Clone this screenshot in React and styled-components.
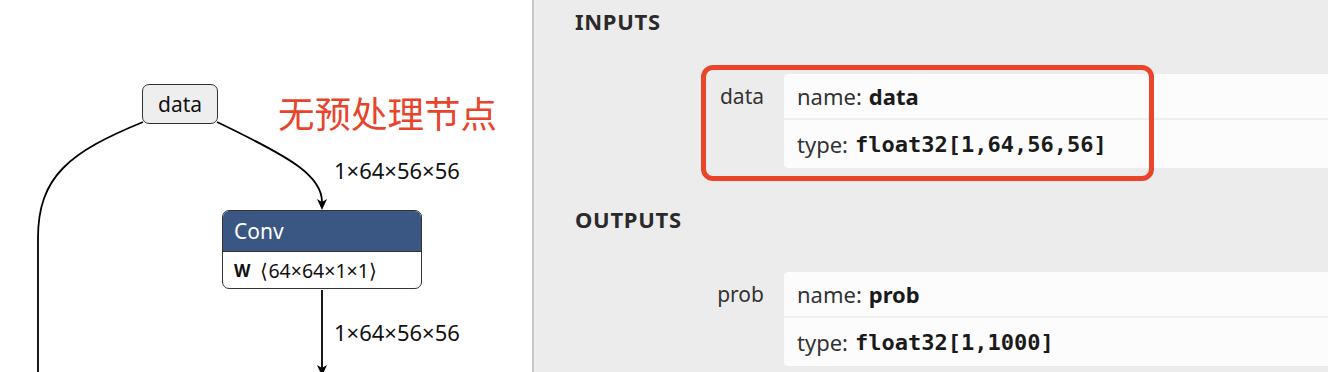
import styled, { createGlobalStyle } from "styled-components";

const GlobalStyle = createGlobalStyle`
  html, body {
    margin: 0;
    padding: 0;
    background: #ffffff;
  }
  body {
    font-family: "Noto Sans", "Open Sans", sans-serif;
    color: #222;
  }
`;

const Page = styled.div`
  display: flex;
  width: 1328px;
  height: 372px;
  overflow: hidden;
`;

const Canvas = styled.div`
  position: relative;
  width: 532px;
  flex-shrink: 0;
  background: #ffffff;
  overflow: hidden;
`;

const Edges = styled.svg`
  position: absolute;
  left: 0;
  top: 0;
  width: 532px;
  height: 372px;
`;

const Node = styled.div`
  position: absolute;
  left: ${(p) => p.x}px;
  top: ${(p) => p.y}px;
  width: ${(p) => p.w}px;
  box-sizing: border-box;
  border: 1.8px solid #333;
  border-radius: 7px;
  overflow: hidden;
  background: ${(p) => p.fill || "#fff"};
`;

const InputLabel = styled.div`
  height: 38px;
  display: flex;
  align-items: center;
  justify-content: center;
  font-size: 21px;
  color: #111;
`;

const NodeHeader = styled.div`
  height: 40px;
  display: flex;
  align-items: center;
  padding-left: 11px;
  background: #3a5683;
  color: #fff;
  font-size: 21px;
  border-bottom: 1.8px solid #333;
`;

const NodeAttr = styled.div`
  height: 36px;
  display: flex;
  align-items: center;
  padding-left: 11px;
  font-size: 19.5px;
  color: #111;
  b {
    font-size: 17px;
    margin-right: 10px;
  }
`;

const EdgeLabel = styled.div`
  position: absolute;
  left: ${(p) => p.x}px;
  top: ${(p) => p.y}px;
  font-size: 22px;
  line-height: 24px;
  color: #111;
  white-space: nowrap;
`;

const Note = styled.div`
  position: absolute;
  left: 278px;
  top: 89px;
  font-family: "Noto Sans CJK SC", sans-serif;
  font-size: 36.5px;
  line-height: 48px;
  color: #e8442c;
  white-space: nowrap;
`;

const Sidebar = styled.div`
  flex: 1;
  background: #ececec;
  border-left: 2px solid #c8c8c8;
  padding-left: 41px;
  overflow: hidden;
`;

const Section = styled.div`
  padding: 7px 0 30px;
`;

const Heading = styled.div`
  font-size: 22px;
  line-height: 28px;
  font-weight: 700;
  letter-spacing: 0.7px;
  color: #2a2a2a;
  margin-bottom: 39px;
`;

const Argument = styled.div`
  position: relative;
  display: flex;
`;

const ArgName = styled.div`
  width: 209px;
  box-sizing: border-box;
  padding-right: 20px;
  text-align: right;
  font-size: 21px;
  line-height: 44px;
  color: #333;
`;

const Card = styled.div`
  flex: 1;
  margin-right: -20px;
  background: #fcfcfc;
  border-radius: 4px;
`;

const Field = styled.div`
  height: ${(p) => p.h}px;
  display: flex;
  align-items: center;
  padding-left: 13px;
  font-size: 22px;
  color: #333;
  & + & {
    border-top: 2px solid #efefef;
  }
  b {
    margin-left: 7px;
    color: #1a1a1a;
  }
`;

const Mono = styled.b`
  font-family: "DejaVu Sans Mono", "Liberation Mono", monospace;
  font-size: 22px;
`;

const Highlight = styled.div`
  position: absolute;
  left: 126px;
  top: -9px;
  width: 453px;
  height: 116px;
  box-sizing: border-box;
  border: 5px solid #ea4429;
  border-radius: 12px;
  pointer-events: none;
`;

const Arrow = ({ x, y }) => (
  <path d={`M ${x} ${y} L ${x - 5} ${y - 11} L ${x} ${y - 8} L ${x + 5} ${y - 11} Z`} fill="#000" />
);

const Graph = () => (
  <Canvas>
    <Edges viewBox="0 0 532 372">
      <g fill="none" stroke="#000" strokeWidth="1.8">
        <path d="M 143 122 C 70 152, 38 176, 38 238 L 38 380" />
        <path d="M 217 122 C 292 158, 322 176, 322 202" />
        <path d="M 322 290 L 322 368" />
      </g>
      <Arrow x={322} y={210} />
      <Arrow x={322} y={376} />
    </Edges>
    <Node x={142} y={84} w={76} fill="#eeeeee">
      <InputLabel>data</InputLabel>
    </Node>
    <Note>无预处理节点</Note>
    <EdgeLabel x={334} y={158}>1×64×56×56</EdgeLabel>
    <Node x={222} y={210} w={200}>
      <NodeHeader>Conv</NodeHeader>
      <NodeAttr>
        <b>W</b>⟨64×64×1×1⟩
      </NodeAttr>
    </Node>
    <EdgeLabel x={334} y={320}>1×64×56×56</EdgeLabel>
  </Canvas>
);

const ArgumentRow = ({ label, name, type, highlighted }) => (
  <Argument>
    <ArgName>{label}</ArgName>
    <Card>
      <Field h={44}>
        name:<b>{name}</b>
      </Field>
      <Field h={48}>
        type:<Mono>{type}</Mono>
      </Field>
    </Card>
    {highlighted && <Highlight />}
  </Argument>
);

const App = () => (
  <Page>
    <GlobalStyle />
    <Graph />
    <Sidebar>
      <Section>
        <Heading>INPUTS</Heading>
        <ArgumentRow label="data" name="data" type="float32[1,64,56,56]" highlighted />
      </Section>
      <Section>
        <Heading>OUTPUTS</Heading>
        <ArgumentRow label="prob" name="prob" type="float32[1,1000]" />
      </Section>
    </Sidebar>
  </Page>
);

export default App;
